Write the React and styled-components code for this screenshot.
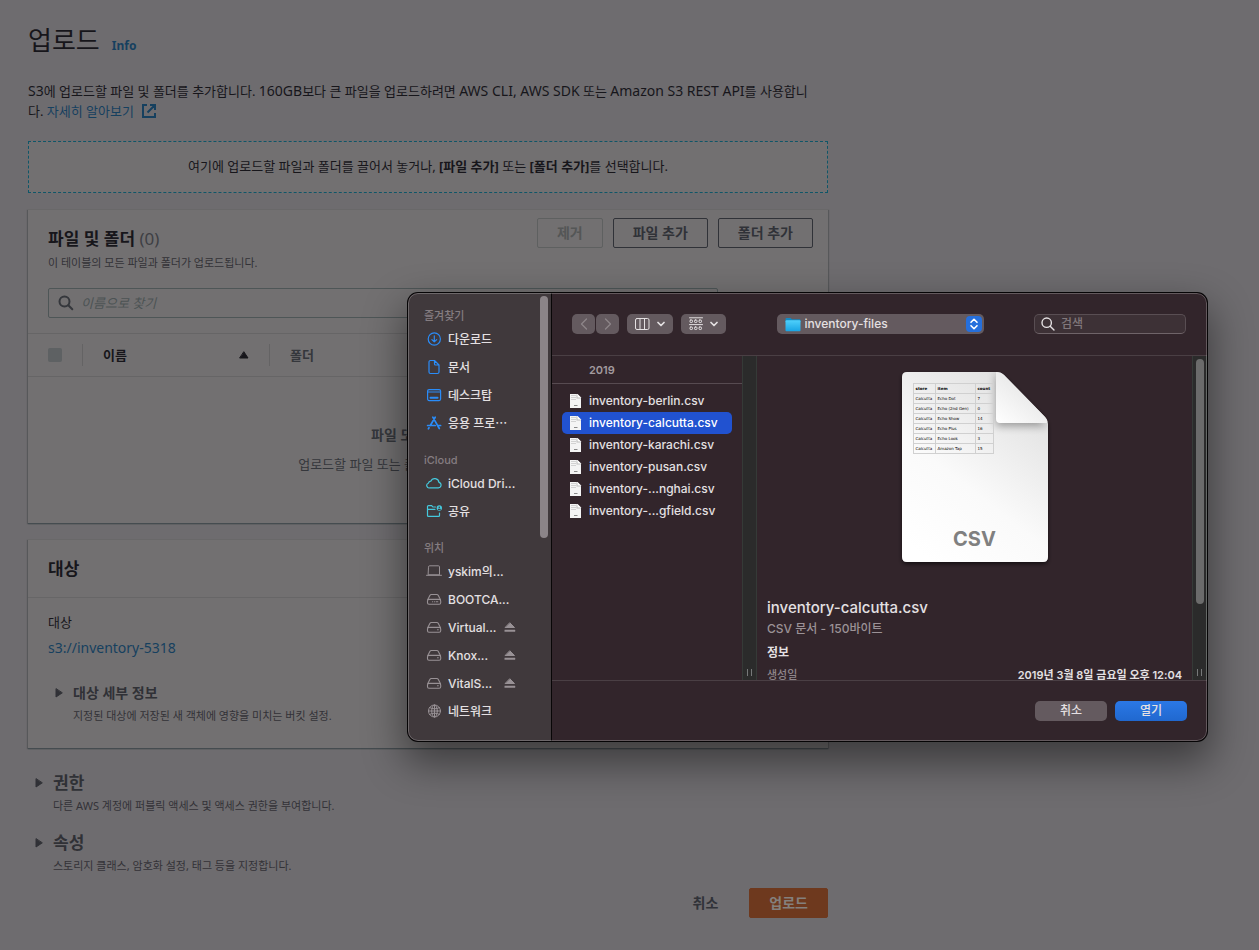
import React from "react";
import styled, { createGlobalStyle } from "styled-components";

const GlobalStyle = createGlobalStyle`
  *, *::before, *::after { box-sizing: border-box; }
  body {
    margin: 0;
    background: #6e6c6f;
    color: #17161b;
    font-family: "Noto Sans", "Noto Sans CJK KR", sans-serif;
    font-size: 13px;
    line-height: 20px;
  }
  h1, h2, h3, p, ul, dl, dd { margin: 0; padding: 0; }
  ul { list-style: none; }
  button, input, select { font: inherit; color: inherit; margin: 0; }
`;

/* ---------- upload page ---------- */

const Page = styled.div`
  position: relative;
  min-height: 100vh;
`;

const Content = styled.main`
  display: flex;
  flex-direction: column;
  gap: 16px;
  max-width: 856px;
  padding: 20px 28px 32px;
`;

const TitleBar = styled.header`
  display: flex;
  align-items: baseline;
  gap: 12px;
  height: 45px;
`;

const PageTitle = styled.h1`
  font-size: 26px;
  line-height: 40px;
  font-weight: 400;
`;

const Link = styled.a`
  color: #16405f;
  text-decoration: none;
  svg { vertical-align: -3px; margin-left: 4px; }
`;

const InfoLink = styled(Link)`
  font-size: 12px;
  font-weight: 700;
`;

const Intro = styled.p`
  padding-right: 12px;
`;

const Latin = styled.span`
  font-size: 14px;
`;

const DropZone = styled.div`
  margin-top: 4px;
  height: 52px;
  padding-bottom: 2px;
  display: flex;
  align-items: center;
  justify-content: center;
  border: 1px dashed #0f5668;
  background: #727071;
`;

const Panel = styled.section`
  background: #727071;
  border-top: 1px solid #696869;
  box-shadow: 0 1px 1px #454c50, 1px 1px 1px #5c5b5d, -1px 1px 1px #5c5b5d;
`;

const PanelHead = styled.div`
  display: flex;
  justify-content: space-between;
  padding: ${(p) => (p.$plain ? "14px 20px 13px" : "8px 15px 0 20px")};
  border-bottom: ${(p) => (p.$plain ? "1px solid #676667" : "0")};
`;

const PanelTitle = styled.h2`
  font-size: 17px;
  line-height: ${(p) => (p.$tall ? 30 : 26)}px;
  font-weight: 700;
  span { font-weight: 400; color: #3e3f44; }
`;

const HeadText = styled.div`
  padding-top: 8px;
`;

const Hint = styled.p`
  font-size: 11px;
  line-height: 22px;
  color: #333237;
`;

const Actions = styled.div`
  display: flex;
  align-items: flex-start;
  gap: 10px;
`;

const Button = styled.button`
  height: 30px;
  padding: 0 19px;
  border: 1px solid ${(p) => (p.disabled ? "#5e6060" : "#303238")};
  border-radius: 2px;
  background: transparent;
  color: ${(p) => (p.disabled ? "#545656" : "#303238")};
  font-size: 14px;
  line-height: 26px;
  font-weight: 700;
`;

const PlainButton = styled(Button)`
  border-color: transparent;
`;

const PrimaryButton = styled(Button)`
  border-color: #6e391e;
  background: #6e391e;
  color: #84807d;
`;

const SearchField = styled.label`
  display: flex;
  align-items: center;
  gap: 7px;
  height: 30px;
  margin: 14px 110px 15px 20px;
  padding: 0 9px;
  border: 1px solid #4e5657;
  border-radius: 2px;
  color: #35373c;
  input {
    flex: 1;
    border: 0;
    outline: 0;
    padding: 0;
    background: transparent;
  }
  input::placeholder { color: #4c5354; font-style: italic; opacity: 1; }
`;

const FileTable = styled.table`
  width: 100%;
  border-collapse: collapse;
  table-layout: fixed;
  thead tr { height: 43px; border-top: 1px solid #666566; border-bottom: 1px solid #666566; }
  th { padding: 0; text-align: left; font-weight: 700; }
`;

const HeadCell = styled.div`
  display: flex;
  align-items: center;
  justify-content: space-between;
  height: 22px;
  padding: 0 20px;
  border-right: ${(p) => (p.$last ? "0" : "1px solid #646364")};
  color: ${(p) => (p.$muted ? "#35373c" : "inherit")};
`;

const CheckBox = styled.input`
  appearance: none;
  width: 14px;
  height: 14px;
  border-radius: 2px;
  background: #5e6163;
`;

const EmptyCell = styled.td`
  height: 146px;
  padding: 0 20px 16px;
  text-align: center;
  color: #35373c;
  strong { display: block; margin-bottom: 9px; padding-top: 16px; font-size: 14px; }
`;

const PanelBody = styled.div`
  padding: 14px 20px 21px;
`;

const TargetLink = styled(Link)`
  display: block;
  margin: 6px 0 23px;
  font-size: 14px;
`;

const Expander = styled.div`
  display: grid;
  grid-template-columns: 8px 1fr;
  column-gap: 10px;
  align-items: center;
  padding-left: 7px;
  color: #303136;
`;

const ExpanderButton = styled.button`
  grid-column: 1 / -1;
  display: grid;
  grid-template-columns: subgrid;
  align-items: center;
  padding: 0;
  border: 0;
  background: transparent;
  text-align: left;
  font-weight: 700;
  font-size: ${(p) => (p.$large ? 17 : 14)}px;
  line-height: 24px;
`;

const ExpanderHint = styled(Hint)`
  grid-column: 2;
`;

const Sections = styled.div`
  display: flex;
  flex-direction: column;
  gap: 14px;
  padding-top: 7px;
`;

const Footer = styled.footer`
  display: flex;
  justify-content: flex-end;
  gap: 11px;
  margin-top: -5px;
`;

/* ---------- file chooser ---------- */

const Dialog = styled.div`
  position: absolute;
  top: 293px;
  right: 52px;
  width: 799px;
  height: 448px;
  display: grid;
  grid-template-columns: 144px 1fr;
  overflow: hidden;
  border-radius: 10px;
  background: #32252b;
  box-shadow: 0 0 0 1px #050405, 0 18px 40px 4px rgba(0, 0, 0, 0.45);
  font-family: Inter, "Noto Sans CJK KR", sans-serif;
  font-size: 12px;
  font-weight: 500;
  line-height: 20px;
  color: #e4e0e2;
  &::after {
    content: "";
    position: absolute;
    inset: 0;
    border: 1px solid rgba(255, 255, 255, 0.24);
    border-radius: 10px;
    pointer-events: none;
  }
`;

const Sidebar = styled.nav`
  display: flex;
  justify-content: space-between;
  border-right: 1px solid #080607;
  background: #40393c;
`;

const Places = styled.div`
  display: flex;
  flex-direction: column;
  gap: 14px;
  padding-top: 14px;
`;

const GroupTitle = styled.h3`
  padding-left: 16px;
  font-size: 11px;
  line-height: 18px;
  font-weight: 500;
  color: #857d81;
`;

const Place = styled.a`
  display: flex;
  align-items: center;
  height: 28px;
  padding-left: 18px;
  color: inherit;
  text-decoration: none;
  white-space: nowrap;
  svg { flex: none; color: ${(p) => p.$tint}; }
`;

const PlaceName = styled.span`
  width: ${(p) => (p.$narrow ? "62px" : "auto")};
  padding: 2px 0 0 6px;
`;

const Thumb = styled.div`
  width: 8px;
  height: ${(p) => p.$length}px;
  margin: 3px;
  border-radius: 4px;
  background: ${(p) => p.$color};
`;

const Main = styled.div`
  display: grid;
  grid-template-rows: 63px 1fr 61px;
  min-width: 0;
  min-height: 0;
`;

const Toolbar = styled.div`
  display: flex;
  align-items: center;
  justify-content: space-between;
  padding: 0 21px 0 20px;
  border-bottom: 1px solid #4a3f44;
`;

const Tools = styled.div`
  display: flex;
  gap: ${(p) => (p.$tight ? 1 : 8)}px;
`;

const Tool = styled.button`
  display: flex;
  align-items: center;
  justify-content: center;
  gap: 7px;
  width: ${(p) => p.$width}px;
  height: 20px;
  padding: 0;
  border: 0;
  border-radius: 5px;
  background: #645a5f;
  color: ${(p) => (p.disabled ? "#8d8589" : "#e4e0e2")};
`;

const FolderPicker = styled.label`
  display: flex;
  align-items: center;
  gap: 4px;
  width: 207px;
  height: 20px;
  padding: 0 2px 0 8px;
  border-radius: 5px;
  background: #645a5f;
  select {
    flex: 1;
    appearance: none;
    border: 0;
    outline: 0;
    padding: 0;
    background: transparent;
  }
`;

const SearchBox = styled.label`
  display: flex;
  align-items: center;
  gap: 6px;
  width: 152px;
  height: 20px;
  padding: 0 6px;
  border: 1px solid #594e53;
  border-bottom-color: #6f6469;
  border-radius: 5px;
  background: #3d3136;
  input {
    flex: 1;
    min-width: 0;
    border: 0;
    outline: 0;
    padding: 0;
    background: transparent;
  }
  input::placeholder { color: #81787c; opacity: 1; }
`;

const Columns = styled.div`
  display: grid;
  grid-template-columns: 190px 15px 1fr 15px;
  min-height: 0;
  overflow: hidden;
`;

const FolderName = styled.h3`
  height: 28px;
  padding-left: 37px;
  border-bottom: 1px solid #574b51;
  font-size: 11px;
  line-height: 28px;
  font-weight: 600;
  color: #a39b9f;
`;

const Files = styled.ul`
  padding: 6px 10px;
`;

const File = styled.li`
  display: flex;
  align-items: center;
  gap: 7px;
  height: 22px;
  padding-left: 7px;
  border-radius: 5px;
  background: ${(p) => (p.$selected ? "#2152d0" : "transparent")};
  color: ${(p) => (p.$selected ? "#ffffff" : "inherit")};
`;

const Splitter = styled.div`
  display: flex;
  flex-direction: column;
  align-items: center;
  justify-content: space-between;
  border: solid #353a37;
  border-width: 0 1px;
  background: #2b2b2b;
`;

const Grip = styled.div`
  width: 5px;
  height: 7px;
  margin: auto 0 4px;
  border: solid #77797a;
  border-width: 0 1px;
`;

const Details = styled.div`
  padding: 16px 10px 0;
  overflow: hidden;
`;

const Preview = styled.figure`
  position: relative;
  width: 146px;
  height: 190px;
  margin: 0 auto 36px;
  > svg { position: absolute; overflow: visible; }
`;

const PreviewTable = styled.table`
  position: absolute;
  top: 11px;
  left: 11px;
  width: 80px;
  border-collapse: collapse;
  table-layout: fixed;
  font: 4px/6px "DejaVu Sans", sans-serif;
  color: #000;
  tr { height: 10px; }
  th, td {
    height: 10px;
    padding: 0 2px;
    border: 1px solid #d0d0d0;
    text-align: left;
    font-weight: 400;
    white-space: nowrap;
  }
  th { font-weight: 700; }
`;

const PreviewKind = styled.figcaption`
  position: absolute;
  inset: auto 0 11px;
  text-align: center;
  font-size: 20px;
  line-height: 24px;
  font-weight: 700;
  color: #808080;
`;

const FileTitle = styled.h2`
  font-size: 15px;
  line-height: 20px;
  font-weight: 500;
`;

const Kind = styled.p`
  padding-top: 1px;
  color: #9b9296;
`;

const InfoTitle = styled.h3`
  margin-top: 4px;
  font-size: 12px;
  line-height: 20px;
  font-weight: 700;
`;

const Facts = styled.dl`
  display: flex;
  justify-content: space-between;
  margin-top: 2px;
  font-size: 11px;
  dt { color: #8f868a; }
  dd { font-weight: 600; }
`;

const DialogFooter = styled.div`
  display: flex;
  justify-content: flex-end;
  gap: 8px;
  padding: 20px;
  border-top: 1px solid #4a3f44;
`;

const DialogButton = styled.button`
  width: 72px;
  height: 20px;
  padding: 0;
  border: 0;
  border-radius: 5px;
  background: ${(p) => (p.$primary ? "linear-gradient(#2b78e6, #2068cf)" : "#645a5f")};
  line-height: 18px;
`;

/* ---------- icons ---------- */

const Icon = ({ w = 16, h = 16, children, sw = 1 }) => (
  <svg width={w} height={h} viewBox={`0 0 ${w} ${h}`} fill="none" stroke="currentColor"
    strokeWidth={sw} strokeLinecap="round" strokeLinejoin="round" aria-hidden="true">
    {children}
  </svg>
);

const ExternalIcon = () => (
  <Icon sw={2}>
    <path d="M6 2H2v12h12v-4M9 2h5v5M14 2L6.500 9.500" strokeLinecap="butt" strokeLinejoin="miter" />
  </Icon>
);
const PageSearchIcon = () => (
  <Icon sw={2}>
    <circle cx="6.500" cy="6.500" r="5" />
    <path d="M10.300 10.300l4 4" />
  </Icon>
);
const SortIcon = () => (
  <Icon w={10} h={8}><path d="M5 1L9 7H1z" fill="currentColor" /></Icon>
);
const CaretIcon = () => (
  <Icon w={8} h={10}><path d="M1 1v8l6-4z" fill="currentColor" /></Icon>
);

const icons = {
  download: (
    <Icon sw={1.2}><circle cx="8.300" cy="8" r="6.100" /><path d="M8.300 4.800v6M5.900 8.600l2.400 2.300 2.400-2.300" /></Icon>
  ),
  document: (
    <Icon sw={1.2}><path d="M8.500 1.500H4.500A1.500 1.500 0 003 3v10a1.500 1.500 0 001.500 1.500h7A1.500 1.500 0 0013 13V6zM8.500 1.500V5a1 1 0 001 1H13" /></Icon>
  ),
  desktop: (
    <Icon sw={1.2}><rect x="1.600" y="2.600" width="13" height="11" rx="1.500" /><path d="M2 5h12.500" /><path d="M4.500 10.800h7" strokeWidth="2" /></Icon>
  ),
  apps: (
    <Icon sw={1.7}>
      <path d="M9.200 2.200L4.300 10.500M6.800 2.200l6.500 11.300M1.600 10.500h7.600M12 10.500h2.600M3 12.800l-.6 1" />
    </Icon>
  ),
  cloud: (
    <Icon sw={1.2}><path d="M4 12.800h8.400a2.800 2.800 0 00.6-5.500 4.300 4.300 0 00-8.200-1.100 2.400 2.400 0 00-2.400 2A2.400 2.400 0 004 12.800z" /></Icon>
  ),
  shared: (
    <Icon sw={1.2}>
      <path d="M9.500 4H6.800L5.700 2.600H2.500a1 1 0 00-1 1v8.800a1 1 0 001 1h10a1 1 0 001-1V10M1.500 6.300h7.500" />
      <circle cx="13.300" cy="5" r="2.700" fill="currentColor" stroke="none" />
      <circle cx="13.300" cy="4.200" r=".8" fill="#40393c" stroke="none" /><path d="M12.400 6.300h1.800" stroke="#40393c" />
    </Icon>
  ),
  laptop: (
    <Icon><path d="M2.500 3.800a1 1 0 011-1h9a1 1 0 011 1v8h-11zM.5 12.300h15" /></Icon>
  ),
  drive: (
    <Icon sw={1.1}><path d="M1.800 8.600L4 4.300a1.500 1.500 0 011.300-.8h5.600a1.500 1.500 0 011.300.8l2.200 4.300" /><rect x="1.500" y="8.400" width="13.200" height="4.800" rx="1.500" /><path d="M11.500 10.800h.8" /></Icon>
  ),
  bootcamp: (
    <Icon sw={1.1}><path d="M1.800 8.600L4 4.300a1.500 1.500 0 011.300-.8h5.600a1.500 1.500 0 011.300.8l2.200 4.300" /><rect x="1.500" y="8.400" width="13.200" height="4.800" rx="1.500" /><path d="M6.500 10.800h.2M8.500 10.800h.2M10.300 10.800h1.500" /></Icon>
  ),
  network: (
    <Icon><circle cx="8.500" cy="8" r="6" /><ellipse cx="8.500" cy="8" rx="2.800" ry="6" /><path d="M2.500 8h12M8.500 2v12M3.600 4.600c3 1.700 6.800 1.700 9.800 0M3.600 11.400c3-1.700 6.800-1.700 9.800 0" /></Icon>
  ),
};

const EjectIcon = () => (
  <Icon w={12} h={12}><path d="M6 2L10.500 6.500h-9z" fill="currentColor" /><path d="M1 9h10v1.500H1z" fill="currentColor" strokeWidth=".5" /></Icon>
);
const Chevron = ({ d }) => <Icon w={8} h={14} sw={1.3}><path d={d} /></Icon>;
const DownIcon = () => <Icon w={8} h={8} sw={1.7}><path d="M1 2.500l3 3 3-3" /></Icon>;
const ColumnsIcon = () => (
  <Icon w={15} h={12}><rect x=".5" y=".5" width="13.500" height="11" rx="1.500" /><path d="M5 .5v11M9.500 .5v11" /></Icon>
);
const GroupIcon = () => (
  <Icon w={14} h={14}>
    <path d="M.5 .8h13M.5 7.600h13" />
    {[3, 10].map((y) => [1, 5.500, 10].map((x) => <rect key={x + "-" + y} x={x} y={y} width="2.500" height="2.500" rx=".8" />))}
  </Icon>
);
const FolderIcon = () => (
  <svg width="16" height="15" viewBox="0 0 16 15" aria-hidden="true">
    <defs>
      <linearGradient id="folder" x1="0" y1="0" x2="0" y2="1">
        <stop offset="0" stopColor="#4fd0fb" /><stop offset="1" stopColor="#18a4e4" />
      </linearGradient>
    </defs>
    <path d="M.5 2a1 1 0 011-1h4l1.500 1.200h7.500a1 1 0 011 1V5H.5z" fill="#1389c2" />
    <rect x=".5" y="3.300" width="15" height="11" rx="1" fill="url(#folder)" />
  </svg>
);
const StepperIcon = () => (
  <svg width="16" height="16" viewBox="0 0 16 16" aria-hidden="true">
    <rect width="16" height="16" rx="4" fill="#256fdc" />
    <path d="M5 6.300l3-3 3 3M5 9.700l3 3 3-3" fill="none" stroke="#fff" strokeWidth="1.600" strokeLinecap="round" strokeLinejoin="round" />
  </svg>
);
const SearchIcon = () => (
  <Icon w={14} h={14} sw={1.400}><circle cx="5.700" cy="5.700" r="4.700" /><path d="M9.200 9.200l3.800 3.800" /></Icon>
);
const CsvIcon = () => (
  <svg width="13" height="16" viewBox="0 0 13 16" aria-hidden="true">
    <path d="M1 1h7.500L12 4.500V15H1z" fill="#f4f4f4" />
    <path d="M2 2.500h5M2 4.500h5M2 6.500h5" stroke="#d2d2d2" />
    <path d="M7.500 1v4.500H12z" fill="#bdbdbd" />
    <path d="M8.500 1v3.500H12z" fill="#fff" />
    <path d="M5 12.500h3.500" stroke="#8a8a8a" />
  </svg>
);
const PaperShape = () => (
  <svg width="146" height="190" viewBox="0 0 146 190" aria-hidden="true">
    <defs>
      <linearGradient id="paper" x1=".2" y1="1" x2=".8" y2="0">
        <stop offset="0" stopColor="#fff" /><stop offset=".4" stopColor="#fafafa" /><stop offset="1" stopColor="#dedede" />
      </linearGradient>
      <linearGradient id="fold" x1="0" y1="1" x2=".5" y2=".4">
        <stop offset="0" stopColor="#fff" /><stop offset="1" stopColor="#ececec" />
      </linearGradient>
      <filter id="drop" x="-10%" y="-10%" width="120%" height="120%">
        <feDropShadow dx="0" dy="2" stdDeviation="2" floodOpacity=".6" />
      </filter>
      <filter id="foldShadow" x="-40%" y="-40%" width="180%" height="180%">
        <feGaussianBlur stdDeviation="4" />
      </filter>
      <clipPath id="sheet"><path d="M5 0H95Q99 0 102 3L143 45Q146 48 146 52V185Q146 190 141 190H5Q0 190 0 185V5Q0 0 5 0z" /></clipPath>
    </defs>
    <path d="M5 0H95Q99 0 102 3L143 45Q146 48 146 52V185Q146 190 141 190H5Q0 190 0 185V5Q0 0 5 0z" fill="url(#paper)" filter="url(#drop)" />
    <g clipPath="url(#sheet)">
      <path d="M94 0V54H146L99 6z" fill="#000" opacity=".35" filter="url(#foldShadow)" />
    </g>
    <path d="M94 0Q99 0 102 3L143 45Q146 48 145 51H98Q94 51 94 47z" fill="url(#fold)" />
  </svg>
);

/* ---------- data ---------- */

const BLUE = "#2a8cf8";
const CYAN = "#45c8dc";
const GREY = "#989195";

const groups = [
  { title: "즐겨찾기", tint: BLUE, items: [["download", "다운로드"], ["document", "문서"], ["desktop", "데스크탑"], ["apps", "응용 프로⋯"]] },
  { title: "iCloud", tint: CYAN, items: [["cloud", "iCloud Dri..."], ["shared", "공유"]] },
  {
    title: "위치", tint: GREY,
    items: [["laptop", "yskim의..."], ["bootcamp", "BOOTCA..."], ["drive", "Virtual...", true], ["drive", "Knox...", true], ["drive", "VitalS...", true], ["network", "네트워크"]],
  },
];

const files = [
  "inventory-berlin.csv", "inventory-calcutta.csv", "inventory-karachi.csv",
  "inventory-pusan.csv", "inventory-...nghai.csv", "inventory-...gfield.csv",
];

const stock = [
  ["Echo Dot", 7], ["Echo (2nd Gen)", 0], ["Echo Show", 14],
  ["Echo Plus", 16], ["Echo Look", 3], ["Amazon Tap", 15],
];

const Section = ({ title, hint, large }) => (
  <Expander>
    <ExpanderButton type="button" $large={large}><CaretIcon />{title}</ExpanderButton>
    <ExpanderHint>{hint}</ExpanderHint>
  </Expander>
);

const UploadPage = () => (
  <Content>
    <TitleBar>
      <PageTitle>업로드</PageTitle>
      <InfoLink href="#info">Info</InfoLink>
    </TitleBar>
    <Intro>
      <Latin>S3</Latin>에 업로드할 파일 및 폴더를 추가합니다. <Latin>160GB</Latin>보다 큰 파일을 업로드하려면{" "}
      <Latin>AWS CLI, AWS SDK</Latin> 또는 <Latin>Amazon S3 REST API</Latin>를 사용합니다.{" "}
      <Link href="#learn">자세히 알아보기 <ExternalIcon /></Link>
    </Intro>
    <DropZone>
      <span>여기에 업로드할 파일과 폴더를 끌어서 놓거나, <b>[파일 추가]</b> 또는 <b>[폴더 추가]</b>를 선택합니다.</span>
    </DropZone>

    <Panel>
      <PanelHead>
        <HeadText>
          <PanelTitle>파일 및 폴더 <span>(0)</span></PanelTitle>
          <Hint>이 테이블의 모든 파일과 폴더가 업로드됩니다.</Hint>
        </HeadText>
        <Actions>
          <Button type="button" disabled>제거</Button>
          <Button type="button">파일 추가</Button>
          <Button type="button">폴더 추가</Button>
        </Actions>
      </PanelHead>
      <SearchField>
        <PageSearchIcon />
        <input type="text" placeholder="이름으로 찾기" aria-label="이름으로 찾기" />
      </SearchField>
      <FileTable>
        <colgroup><col width="55" /><col width="187" /><col /></colgroup>
        <thead>
          <tr>
            <th><HeadCell><CheckBox type="checkbox" disabled aria-label="모두 선택" /></HeadCell></th>
            <th><HeadCell>이름 <SortIcon /></HeadCell></th>
            <th><HeadCell $muted $last>폴더</HeadCell></th>
          </tr>
        </thead>
        <tbody>
          <tr>
            <EmptyCell colSpan={3}>
              <strong>파일 또는 폴더 없음</strong>
              업로드할 파일 또는 폴더를 선택하지 않았습니다.
            </EmptyCell>
          </tr>
        </tbody>
      </FileTable>
    </Panel>

    <Panel>
      <PanelHead $plain><PanelTitle $tall>대상</PanelTitle></PanelHead>
      <PanelBody>
        <p>대상</p>
        <TargetLink href="#bucket">s3://inventory-5318</TargetLink>
        <Section title="대상 세부 정보" hint="지정된 대상에 저장된 새 객체에 영향을 미치는 버킷 설정." />
      </PanelBody>
    </Panel>

    <Sections>
      <Section large title="권한" hint="다른 AWS 계정에 퍼블릭 액세스 및 액세스 권한을 부여합니다." />
      <Section large title="속성" hint="스토리지 클래스, 암호화 설정, 태그 등을 지정합니다." />
    </Sections>

    <Footer>
      <PlainButton type="button">취소</PlainButton>
      <PrimaryButton type="button">업로드</PrimaryButton>
    </Footer>
  </Content>
);

const FileChooser = () => (
  <Dialog role="dialog" aria-label="파일 선택">
    <Sidebar>
      <Places>
        {groups.map((g) => (
          <div key={g.title}>
            <GroupTitle>{g.title}</GroupTitle>
            {g.items.map(([icon, name, eject]) => (
              <Place key={name} href="#place" $tint={g.tint}>
                {icons[icon]}
                <PlaceName $narrow={eject}>{name}</PlaceName>
                {eject && <EjectIcon />}
              </Place>
            ))}
          </div>
        ))}
      </Places>
      <Thumb $length={242} $color="#8b8488" />
    </Sidebar>
    <Main>
      <Toolbar>
        <Tools>
          <Tools $tight>
            <Tool type="button" $width={23} disabled aria-label="뒤로"><Chevron d="M6.500 2L1.500 7l5 5" /></Tool>
            <Tool type="button" $width={23} disabled aria-label="앞으로"><Chevron d="M1.500 2l5 5-5 5" /></Tool>
          </Tools>
          <Tool type="button" $width={46} aria-label="보기"><ColumnsIcon /><DownIcon /></Tool>
          <Tool type="button" $width={45} aria-label="그룹"><GroupIcon /><DownIcon /></Tool>
        </Tools>
        <FolderPicker>
          <FolderIcon />
          <select aria-label="폴더"><option>inventory-files</option></select>
          <StepperIcon />
        </FolderPicker>
        <SearchBox>
          <SearchIcon />
          <input type="text" placeholder="검색" aria-label="검색" />
        </SearchBox>
      </Toolbar>
      <Columns>
        <div>
          <FolderName>2019</FolderName>
          <Files>
            {files.map((name) => (
              <File key={name} $selected={name === "inventory-calcutta.csv"}><CsvIcon />{name}</File>
            ))}
          </Files>
        </div>
        <Splitter><Grip /></Splitter>
        <Details>
          <Preview>
            <PaperShape />
            <PreviewTable>
              <colgroup><col width="22" /><col width="40" /><col width="18" /></colgroup>
              <thead><tr><th>store</th><th>item</th><th>count</th></tr></thead>
              <tbody>
                {stock.map(([item, count]) => (
                  <tr key={item}><td>Calcutta</td><td>{item}</td><td>{count}</td></tr>
                ))}
              </tbody>
            </PreviewTable>
            <PreviewKind>CSV</PreviewKind>
          </Preview>
          <FileTitle>inventory-calcutta.csv</FileTitle>
          <Kind>CSV 문서 - 150바이트</Kind>
          <InfoTitle>정보</InfoTitle>
          <Facts><dt>생성일</dt><dd>2019년 3월 8일 금요일 오후 12:04</dd></Facts>
        </Details>
        <Splitter><Thumb $length={245} $color="#6b6b6b" /><Grip /></Splitter>
      </Columns>
      <DialogFooter>
        <DialogButton type="button">취소</DialogButton>
        <DialogButton type="button" $primary>열기</DialogButton>
      </DialogFooter>
    </Main>
  </Dialog>
);

export default function App() {
  return (
    <Page>
      <GlobalStyle />
      <UploadPage />
      <FileChooser />
    </Page>
  );
}
